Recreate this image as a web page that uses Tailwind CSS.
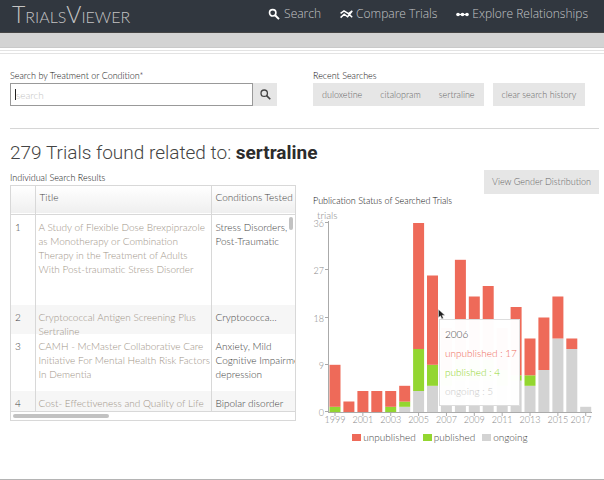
<!DOCTYPE html>
<html lang="en">
<head>
<meta charset="utf-8">
<meta name="viewport" content="width=device-width, initial-scale=1">
<title>TrialsViewer</title>
<script src="https://cdn.jsdelivr.net/npm/@tailwindcss/browser@4"></script>
</head>
<body class="flex min-h-screen flex-col border-b border-[#b4b4b4] bg-white font-['Lato',sans-serif] text-[10px] leading-[14px] font-light text-[#444]">
<header class="flex h-[33px] items-center justify-between border-b border-[#444] bg-[#31373f] pr-4 pl-[12px] pb-[4px]">
  <a href="#" class="font-['Lato',sans-serif] text-[23px] leading-[20px] font-light text-[#c4c4c4] [font-variant-caps:small-caps]">TrialsViewer</a>
  <nav class="flex items-center gap-[19px] font-['Open_Sans',sans-serif] text-[12px] leading-[16px] text-[#c4c6c8]">
    <a href="#" class="flex items-center gap-[4px]">
      <svg class="size-[12px]" viewBox="0 0 12 12" fill="none" stroke="#fff" aria-hidden="true"><circle cx="4.7" cy="4.8" r="3.2" stroke-width="1.6"/><path d="M7.1 7.2 11 11.1" stroke-width="2"/></svg>
      Search</a>
    <a href="#" class="flex items-center gap-[3px]">
      <svg class="h-[12px] w-[13px]" viewBox="0 0 13 12" fill="none" stroke="#fff" stroke-width="1.5" aria-hidden="true"><path d="M.6 5.4 4 2.8 8.400 5.600 12.400 3M.6 9.600 4.200 6.200 7.600 8.800 12.200 3M8.400 5.600 12.200 9.200"/></svg>
      Compare Trials</a>
    <a href="#" class="flex items-center gap-[3px]">
      <svg class="h-[12px] w-[13px]" viewBox="0 0 13 12" fill="#fff" aria-hidden="true"><circle cx="2" cy="6.5" r="1.8"/><circle cx="6.5" cy="6.5" r="1.8"/><circle cx="11" cy="6.5" r="1.8"/><path d="M2 5.9h9v1.2H2z"/></svg>
      Explore Relationships</a>
  </nav>
</header>
<div class="h-[15px] border-b border-[#c9c9c9] bg-[#d3d3d3]"></div>
<div class="mt-[2px] h-[4px] border-y border-[#e3e3e3]"></div>

<main class="pr-[5px] pl-[10px]">
  <section class="grid grid-cols-2 gap-[17px] border-b border-[#d6d6d6] pt-[15px] pb-[22px]">
    <form>
      <label for="q" class="block text-[9px] text-[#111]">Search by Treatment or Condition*</label>
      <div class="relative flex pr-[19px]">
        <input id="q" type="text" placeholder="search" class="h-[23px] min-w-0 flex-1 border border-[#999] pl-[5px] text-[10px] caret-transparent outline-none placeholder:text-[#c4c4c4]">
        <span class="absolute top-[6px] left-[5px] h-[11px] w-px bg-[#222]"></span>
        <button type="button" aria-label="Search" class="flex h-[23px] w-[24px] items-center justify-center bg-[#e6e6e6]">
          <svg class="size-[11px]" viewBox="0 0 12 12" fill="none" stroke="#444" aria-hidden="true"><circle cx="4.6" cy="4.6" r="3.5" stroke-width="1.4"/><path d="M7.2 7.2 11.2 11.2" stroke-width="1.8"/></svg>
        </button>
      </div>
    </form>
    <div>
      <h2 class="text-[9px] text-[#111]">Recent Searches</h2>
      <div class="flex gap-[9px] text-[9px] text-[#666]">
        <div class="flex h-[23px] bg-[#e6e6e6]">
          <button type="button" class="px-[9px]">duloxetine</button>
          <button type="button" class="px-[9px]">citalopram</button>
          <button type="button" class="px-[9px]">sertraline</button>
        </div>
        <button type="button" class="h-[23px] bg-[#e6e6e6] px-[9px]">clear search history</button>
      </div>
    </div>
  </section>

  <h1 class="mt-[12px] font-['Roboto',sans-serif] text-[19px] leading-[24px] font-light text-[#444]">279 Trials found related to: <b class="font-bold text-[#2c2c2c]">sertraline</b></h1>

  <div class="grid grid-cols-2 gap-[17px]">
    <section class="pt-[6px]">
      <h2 class="text-[9px] text-[#111]">Individual Search Results</h2>
      <div class="relative border border-[#d8d8d8]">
        <div class="h-[226px] overflow-hidden border-b border-[#d8d8d8]">
          <table class="w-full table-fixed border-collapse text-left">
            <colgroup><col class="w-[24px]"><col class="w-[176px]"><col></colgroup>
            <thead>
              <tr class="h-[28px] border-b border-[#d8d8d8] bg-linear-to-b from-white to-[#efefef] align-top">
                <td class="border-r border-[#d8d8d8]"></td>
                <th scope="col" class="border-r border-[#d8d8d8] pt-[4px] pl-[4px] font-light">Title</th>
                <th scope="col" class="pt-[4px] pl-[4px] font-light whitespace-nowrap">Conditions Tested</th>
              </tr>
            </thead>
            <tbody class="align-top">
              <tr>
                <td class="border-r border-[#d8d8d8] pl-[4px]"><div class="h-[90px] pt-[5px]">1</div></td>
                <td class="border-r border-[#d8d8d8] pl-[3px] text-[#a09488]"><div class="pt-[5px] whitespace-nowrap">A Study of Flexible Dose Brexpiprazole<br>as Monotherapy or Combination<br>Therapy in the Treatment of Adults<br>With Post-traumatic Stress Disorder</div></td>
                <td class="pl-[4px]"><div class="pt-[5px] whitespace-nowrap">Stress Disorders,<br>Post-Traumatic</div></td>
              </tr>
              <tr class="bg-[#f6f6f6]">
                <td class="border-r border-[#d8d8d8] pl-[4px]"><div class="h-[29px] pt-[5px]">2</div></td>
                <td class="border-r border-[#d8d8d8] pl-[3px] text-[#a09488]"><div class="h-[29px] pt-[5px] whitespace-nowrap">Cryptococcal Antigen Screening Plus<br>Sertraline</div></td>
                <td class="pl-[4px]"><div class="pt-[5px] whitespace-nowrap">Cryptococca…</div></td>
              </tr>
              <tr>
                <td class="border-r border-[#d8d8d8] pl-[4px]"><div class="h-[57px] pt-[5px]">3</div></td>
                <td class="border-r border-[#d8d8d8] pl-[3px] text-[#a09488]"><div class="pt-[5px] whitespace-nowrap">CAMH - McMaster Collaborative Care<br>Initiative For Mental Health Risk Factors<br>In Dementia</div></td>
                <td class="pl-[4px]"><div class="pt-[5px] whitespace-nowrap">Anxiety, Mild<br>Cognitive Impairment,<br>depression</div></td>
              </tr>
              <tr class="bg-[#f6f6f6]">
                <td class="border-r border-[#d8d8d8] pl-[4px]"><div class="h-[29px] pt-[5px]">4</div></td>
                <td class="border-r border-[#d8d8d8] pl-[3px] text-[#a09488]"><div class="pt-[5px] whitespace-nowrap">Cost- Effectiveness and Quality of Life</div></td>
                <td class="pl-[4px]"><div class="pt-[5px] whitespace-nowrap">Bipolar disorder</div></td>
              </tr>
            </tbody>
          </table>
        </div>
        <div class="h-[8px] px-[2px] pt-[2px]"><div class="h-[4px] w-[96px] rounded-full bg-[#c2c2c2]"></div></div>
        <div class="absolute top-[31px] right-[2px] h-[13px] w-[4px] rounded-full bg-[#c2c2c2]"></div>
      </div>
    </section>

    <section class="pt-[5px]">
      <div class="flex justify-end"><button type="button" class="h-[24px] bg-[#e6e6e6] px-[8px] text-[9px] text-[#666]">View Gender Distribution</button></div>
      <h2 class="text-[9px] text-[#111]">Publication Status of Searched Trials</h2>
      <div class="relative">
        <svg id="chart" class="block w-full" viewBox="0 0 286 222" font-size="9" fill="#888" role="img" aria-label="Trials by year and publication status">
          <path d="M15.5 13V204.500M15 204.500H279" fill="none" stroke="#aaa"/>
          <text x="4" y="11" font-size="10">trials</text>
        </svg>
        <div class="absolute top-[111px] left-[126px] flex h-[87px] w-[81px] flex-col gap-[5px] border border-[#ddd] bg-white/98 pt-[7px] pl-[5px] whitespace-nowrap">
          <p>2006</p>
          <p class="text-[#ee6a59]">unpublished : 17</p>
          <p class="text-[#93d630]">published : 4</p>
          <p class="text-[#c8c8c8]">ongoing : 5</p>
        </div>
        <svg class="absolute top-[101px] left-[125px] h-[11px] w-[8px]" viewBox="0 0 8 11" aria-hidden="true"><path d="M.5.5v8l2-1.700 1.300 3 1.500-.6L4 6.200h2.800z" fill="#222" stroke="#ddd" stroke-width=".4"/></svg>
      </div>
      <ul class="flex justify-center gap-[7px] pr-[32px]">
        <li class="flex items-center gap-[2px]"><span class="h-[7px] w-[9px] bg-[#ee6a59]"></span>unpublished</li>
        <li class="flex items-center gap-[2px]"><span class="h-[7px] w-[9px] bg-[#93d630]"></span>published</li>
        <li class="flex items-center gap-[2px]"><span class="h-[7px] w-[9px] bg-[#d3d3d3]"></span>ongoing</li>
      </ul>
    </section>
  </div>
</main>
<script>
// One row per year from 1999: [ongoing, published, unpublished]
const years = [[0,1,8],[0,0,2],[0,0,4],[0,0,4],[0,1,3],[1,1,3],[4,8,24],[5,4,17],[5,3,8],[6,4,19],[6,4,12],[6,4,14],[5,3,8],[6,1,13],[5,2,7],[8,0,10],[14,0,8],[12,0,2],[1,0,0]];
const colors = ['#d3d3d3', '#93d630', '#ee6a59'];
const base = 204, unit = 5.25, step = 13.93;
let out = '';
for (const v of [0, 9, 18, 27, 36]) {
  const y = Math.round(base - v * unit);
  out += `<path d="M12 ${y - .5}h4" stroke="#aaa"/><text x="11" y="${y + 4}" text-anchor="end">${v}</text>`;
}
years.forEach((row, i) => {
  const cx = 22 + i * step;
  let y = base;
  row.forEach((v, k) => {
    if (!v) return;
    y -= v * unit;
    out += `<rect x="${(cx - 5.5).toFixed(1)}" y="${y.toFixed(1)}" width="11" height="${(v * unit).toFixed(1)}" fill="${colors[k]}"/>`;
  });
  if (i % 2 === 0) out += `<path d="M${cx} 204v4" stroke="#aaa"/><text x="${Math.min(cx, 268)}" y="215" text-anchor="middle">${1999 + i}</text>`;
});
document.getElementById('chart').insertAdjacentHTML('beforeend', out);
</script>
</body>
</html>
